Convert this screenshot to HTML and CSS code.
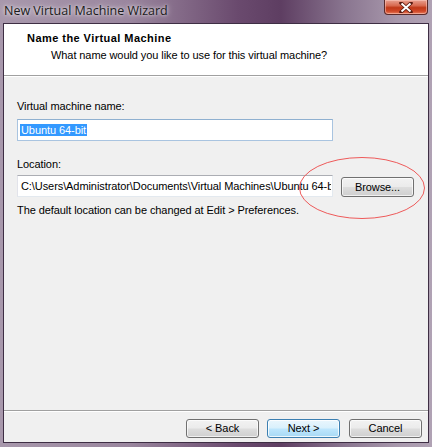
FILE: index.html
```html
<!DOCTYPE html>
<html>
<head>
<meta charset="utf-8">
<link rel="stylesheet" href="styles.css">
</head>
<body>
<div class="window">
  <div class="titlebar">
    <span class="title">New Virtual Machine Wizard</span>
    <div class="close"><svg width="14" height="11" viewBox="0 0 14 11"><path d="M2 1 L12 10 M12 1 L2 10" stroke="#5a1a10" stroke-width="3.6" stroke-linecap="round"/><path d="M2.5 1.5 L11.5 9.5 M11.5 1.5 L2.5 9.5" stroke="#ffffff" stroke-width="2"/></svg></div>
  </div>
  <div class="client">
    <div class="header">
      <div class="h-title">Name the Virtual Machine</div>
      <div class="h-sub">What name would you like to use for this virtual machine?</div>
    </div>
    <div class="content">
      <div class="label l-name">Virtual machine name:</div>
      <div class="input name-input"><span class="sel">Ubuntu 64-bit</span></div>
      <div class="label l-loc">Location:</div>
      <div class="loc-row">
        <div class="input loc-input"><span class="loc-text">C:\Users\Administrator\Documents\Virtual Machines\Ubuntu 64-bit</span></div>
        <div class="btn browse">Browse...</div>
      </div>
      <div class="label hint">The default location can be changed at Edit &gt; Preferences.</div>
    </div>
    <div class="footer">
      <div class="btn">&lt; Back</div>
      <div class="btn next">Next &gt;</div>
      <div class="btn cancel">Cancel</div>
    </div>
  </div>
  <svg class="ellipse" width="432" height="447" viewBox="0 0 432 447"><ellipse cx="362" cy="188" rx="62.5" ry="30.5" fill="none" stroke="#ee5a5a" stroke-width="1"/></svg>
</div>
</body>
</html>
```
FILE: styles.css
```css
html, body {
  margin: 0;
  padding: 0;
}
body {
  width: 432px;
  height: 447px;
  overflow: hidden;
  font-family: "Liberation Sans", Arial, sans-serif;
  font-size: 11px;
  letter-spacing: -0.08px;
  color: #000;
}
.window {
  position: relative;
  width: 432px;
  height: 447px;
  display: flex;
  flex-direction: column;
  background: linear-gradient(90deg, #a898ac 0%, #9a869e 30%, #6a4a6e 55%, #5e3e62 65%, #8a7690 80%, #a898ac 92%, #b0a2b4 100%);
}
.titlebar {
  height: 23px;
  flex: none;
  display: flex;
  align-items: flex-start;
  justify-content: space-between;
  padding: 0 4px 0 4px;
}
.title {
  font-family: "Open Sans", "Noto Sans", sans-serif;
  font-size: 12.5px;
  letter-spacing: 0;
  line-height: 19px;
  padding-top: 1px;
  color: #1a1a1a;
  text-shadow: 0 0 6px rgba(255,255,255,0.8), 0 0 3px rgba(255,255,255,0.7);
}
.close {
  width: 44px;
  height: 15px;
  box-sizing: border-box;
  border: 1px solid #5a2a2a;
  border-top: none;
  border-radius: 0 0 4px 4px;
  background: linear-gradient(180deg, #e8a090 0%, #d86a50 40%, #c03818 55%, #d04828 80%, #e88060 100%);
  box-shadow: inset 0 0 0 1px rgba(255,210,200,0.5);
  display: flex;
  align-items: center;
  justify-content: center;
}
.client {
  flex: 1;
  margin: 0 3px 4px 3px;
  border: 1px solid #3e2e44;
  background: #f0f0f0;
  display: flex;
  flex-direction: column;
}
.header {
  background: #fff;
  height: 52px;
  border-bottom: 1px solid #a0a0a0;
  box-shadow: 0 1px 0 #fff;
  padding: 8px 0 0 23px;
  box-sizing: border-box;
}
.h-title {
  font-weight: bold;
  letter-spacing: 0.45px;
  line-height: 13px;
}
.h-sub {
  padding-left: 24px;
  margin-top: 4px;
  line-height: 13px;
}
.content {
  flex: 1;
  padding: 24px 0 0 13px;
}
.label {
  line-height: 13px;
}
.input {
  box-sizing: border-box;
  width: 316px;
  height: 22px;
  background: #fff;
  border: 1px solid #c8d8e8;
  border-top-color: #abadb3;
  padding: 4px 0 0 2px;
  line-height: 13px;
  white-space: nowrap;
  overflow: hidden;
}
.name-input {
  margin-top: 6px;
  border-color: #a9c4e0;
  border-top-color: #8fb0d0;
}
.sel {
  background: #3399ff;
  color: #fff;
  padding: 0 1px;
}
.l-loc {
  margin-top: 17px;
}
.loc-row {
  margin-top: 4px;
  display: flex;
  align-items: flex-start;
  gap: 8px;
}
.loc-input {
  flex: none;
  border-color: #e3e9ef;
  border-top-color: #abadb3;
  border-left-color: #e2e3ea;
}
.loc-text {
  display: block;
  width: 310px;
  overflow: hidden;
  padding-left: 1px;
}
.btn {
  box-sizing: border-box;
  width: 73px;
  height: 20px;
  border: 1px solid #707070;
  border-radius: 3px;
  background: linear-gradient(180deg, #f2f2f2 0%, #ebebeb 48%, #dddddd 52%, #cfcfcf 100%);
  box-shadow: inset 0 0 0 1px rgba(255,255,255,0.7);
  text-align: center;
  line-height: 18px;
}
.browse {
  margin-top: 2px;
}
.hint {
  margin-top: 7px;
}
.footer {
  height: 32px;
  flex: none;
  border-top: 1px solid #a0a0a0;
  box-shadow: inset 0 1px 0 #fff;
  display: flex;
  justify-content: flex-end;
  align-items: flex-start;
  padding: 8px 6px 0 0;
  box-sizing: border-box;
  gap: 8px;
}
.footer .btn {
  height: 19px;
  line-height: 17px;
}
.next {
  border-color: #3c7fb1;
  background: linear-gradient(180deg, #eaf6fd 0%, #d9f0fc 48%, #bee6fd 52%, #a7d9f5 100%);
  box-shadow: inset 0 0 0 1px rgba(255,255,255,0.8);
}
.footer .cancel {
  margin-left: 1px;
}
.ellipse {
  position: absolute;
  left: 0;
  top: 0;
  pointer-events: none;
}
```
